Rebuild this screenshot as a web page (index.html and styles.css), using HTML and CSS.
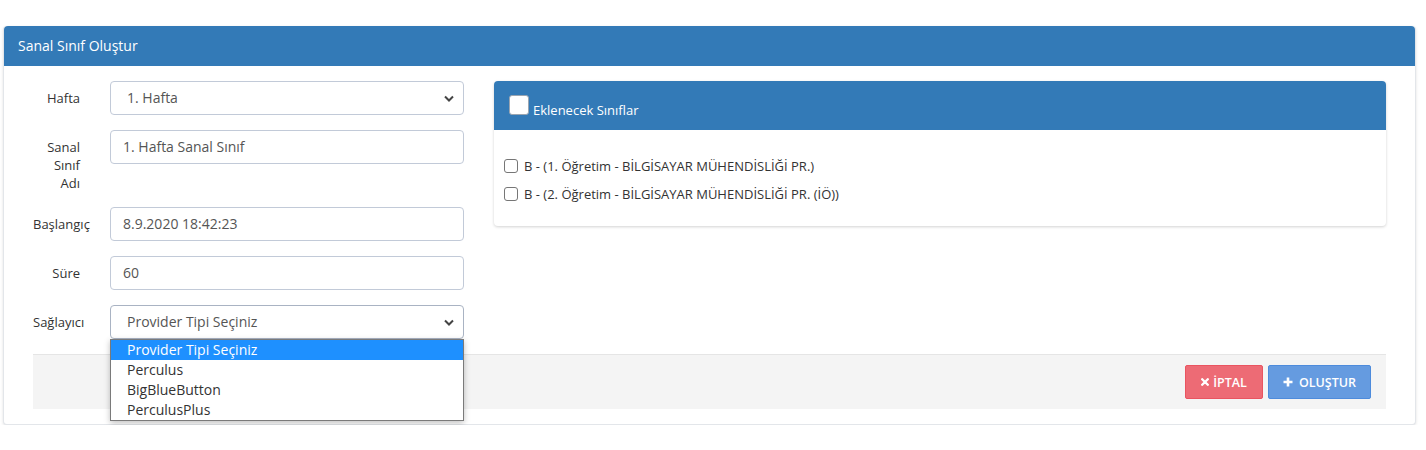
FILE: index.html
```html
<!DOCTYPE html>
<html lang="tr">
<head>
<meta charset="utf-8">
<title>Sanal Sınıf Oluştur</title>
<link rel="stylesheet" href="styles.css">
</head>
<body>
<div class="card">
  <div class="card-head">Sanal Sınıf Oluştur</div>
  <div class="card-body">
    <div class="cols">
      <div class="form-col">
        <div class="form-row">
          <label class="lbl">Hafta</label>
          <div class="ctl select"><span>1. Hafta</span><svg class="chev" width="10" height="7" viewBox="0 0 10 7"><path d="M1 1.5 L5 5.5 L9 1.5" fill="none" stroke="#444" stroke-width="2"/></svg></div>
        </div>
        <div class="form-row">
          <label class="lbl">Sanal Sınıf Adı</label>
          <div class="ctl input">1. Hafta Sanal Sınıf</div>
        </div>
        <div class="form-row">
          <label class="lbl">Başlangıç</label>
          <div class="ctl input">8.9.2020 18:42:23</div>
        </div>
        <div class="form-row">
          <label class="lbl">Süre</label>
          <div class="ctl input">60</div>
        </div>
        <div class="form-row">
          <label class="lbl">Sağlayıcı</label>
          <div class="ctl select open"><span>Provider Tipi Seçiniz</span><svg class="chev" width="10" height="7" viewBox="0 0 10 7"><path d="M1 1.5 L5 5.5 L9 1.5" fill="none" stroke="#444" stroke-width="2"/></svg>
            <ul class="dropdown">
              <li class="active">Provider Tipi Seçiniz</li>
              <li>Perculus</li>
              <li>BigBlueButton</li>
              <li>PerculusPlus</li>
            </ul>
          </div>
        </div>
      </div>
      <div class="panel">
        <div class="panel-head"><span class="big-check"></span><span class="panel-title">Eklenecek Sınıflar</span></div>
        <div class="panel-body">
          <div class="item"><span class="check"></span><span>B - (1. Öğretim - BİLGİSAYAR MÜHENDİSLİĞİ PR.)</span></div>
          <div class="item"><span class="check"></span><span>B - (2. Öğretim - BİLGİSAYAR MÜHENDİSLİĞİ PR. (İÖ))</span></div>
        </div>
      </div>
    </div>
    <div class="actions">
      <button class="btn btn-red"><svg class="ico" width="8" height="8" viewBox="0 0 8 8"><path d="M1.2 1.2 L6.8 6.8 M6.8 1.2 L1.2 6.8" stroke="#fff" stroke-width="2.3" stroke-linecap="round"/></svg><span>İPTAL</span></button>
      <button class="btn btn-blue"><svg class="ico" width="10" height="10" viewBox="0 0 10 10"><path d="M5 0.5 V9.5 M0.5 5 H9.5" stroke="#fff" stroke-width="2.6"/></svg><span>OLUŞTUR</span></button>
    </div>
  </div>
</div>
</body>
</html>
```
FILE: styles.css
```css
* { box-sizing: border-box; }
html, body { margin: 0; background: #fff; }
body {
  padding: 26px 10px 0 3px;
  font-family: "Open Sans", "Liberation Sans", sans-serif;
  color: #333;
}
.card {
  border: 1px solid #e3e6ea;
  border-top: none;
  border-radius: 4px;
  box-shadow: 0 1px 3px rgba(0,0,0,0.12);
  background: #fff;
}
.card-head {
  background: #337ab7;
  color: #fff;
  height: 40px;
  font-size: 14px;
  line-height: 40px;
  padding-left: 14px;
  border-radius: 4px 4px 0 0;
}
.card-body {
  padding: 15px 29px 15px 29px;
}
.cols {
  display: flex;
  gap: 30px;
  align-items: flex-start;
}
.form-col {
  width: 431px;
  flex: none;
  display: flex;
  flex-direction: column;
  gap: 15px;
}
.form-row {
  display: flex;
  gap: 30px;
  align-items: flex-start;
}
.lbl {
  width: 47px;
  flex: none;
  text-align: right;
  font-size: 13px;
  line-height: 18px;
  padding-top: 8px;
  color: #333;
}
.ctl {
  position: relative;
  width: 354px;
  height: 34px;
  border: 1px solid #c2cad8;
  border-radius: 4px;
  font-size: 14px;
  line-height: 32px;
  color: #555;
  padding: 0 12px;
  background: #fff;
}
.select { padding-left: 16px; display: flex; justify-content: space-between; align-items: center; }
.select span { line-height: 32px; }
.chev { margin-right: -3px; flex: none; }
.select.open { border-color: #a9b3c3; }
.dropdown {
  position: absolute;
  left: -1px;
  top: 33px;
  width: 354px;
  margin: 0;
  padding: 0;
  list-style: none;
  background: #fff;
  border: 1px solid #7a7a7a;
  box-shadow: 0 2px 6px rgba(0,0,0,0.25);
  z-index: 5;
}
.dropdown li {
  height: 20px;
  line-height: 20px;
  padding-left: 16px;
  font-size: 14px;
  color: #333;
}
.dropdown li.active { background: #1e90ff; color: #fff; }
.panel {
  flex: 1;
  border-radius: 4px;
  box-shadow: 0 1px 3px rgba(0,0,0,0.18);
  background: #fff;
  height: 145px;
}
.panel-head {
  background: #337ab7;
  height: 49px;
  border-radius: 4px 4px 0 0;
  display: flex;
  align-items: flex-end;
  padding: 0 0 15px 15px;
  color: #fff;
}
.big-check {
  width: 20px;
  height: 20px;
  background: #fff;
  border: 1px solid #9aa5b1;
  border-radius: 3px;
  margin-right: 4px;
}
.panel-title { font-size: 13px; line-height: 16px; margin-bottom: -3px; }
.panel-body { padding: 22px 10px 0 10px; }
.item {
  display: flex;
  align-items: center;
  height: 28px;
  font-size: 13px;
  color: #333;
}
.check {
  width: 14px;
  height: 14px;
  border: 1px solid #767676;
  border-radius: 3px;
  margin-right: 6px;
  background: #fff;
  flex: none;
}
.actions {
  margin-top: 15px;
  background: #f4f4f4;
  border-top: 1px solid #e5e5e5;
  padding: 10px 15px 10px 0;
  display: flex;
  justify-content: flex-end;
  gap: 5px;
}
.btn {
  height: 34px;
  border-radius: 2px;
  color: #fff;
  font-family: "Open Sans", "Liberation Sans", sans-serif;
  font-size: 12.5px;
  font-weight: 600;
  display: flex;
  align-items: center;
  justify-content: center;
  padding: 0;
  cursor: pointer;
}
.ico { flex: none; }
.btn-red { background: #ed6b75; border: 1px solid #ea5460; width: 78px; gap: 4px; }
.btn-blue { background: #659be0; border: 1px solid #4d8bdc; width: 103px; gap: 6px; }
```
